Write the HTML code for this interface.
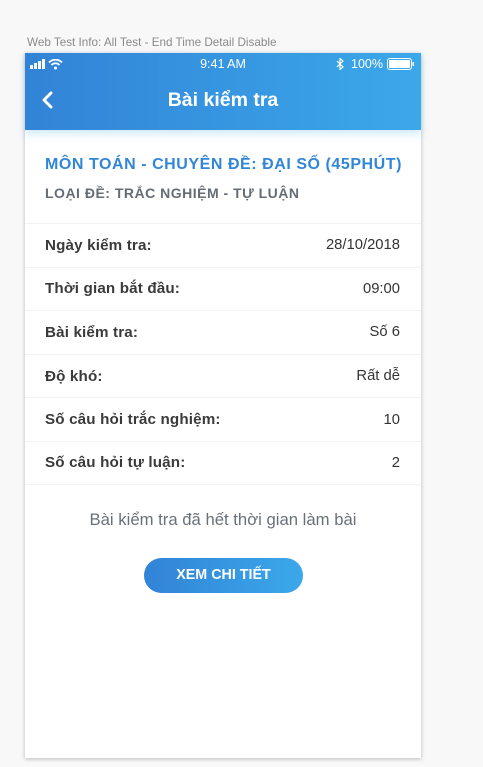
<!DOCTYPE html>
<html><head><meta charset="utf-8"><style>
*{margin:0;padding:0;box-sizing:border-box}
body{width:483px;height:767px;background:#f8f8f8;font-family:"Liberation Sans",Arial,sans-serif;position:relative;overflow:hidden}
.cap{position:absolute;left:27px;top:36px;font-size:11.7px;color:#8a8a8a}
.phone{position:absolute;left:25px;top:53px;width:396px;height:705px;background:#fff;box-shadow:0 1px 4px rgba(0,0,0,.25)}
.hdr{height:77px;background:linear-gradient(90deg,#3283d6,#3ba8ea);color:#fff;position:relative;box-shadow:0 4px 8px rgba(59,168,234,.25)}
.sb{position:absolute;top:4px;left:0;right:0;height:14px;font-size:12.5px}
.time{position:absolute;left:0;right:0;text-align:center;top:0}
.title{position:absolute;left:0;right:0;top:36px;text-align:center;font-size:19.5px;font-weight:bold}
.h1{position:absolute;left:20px;top:103px;font-size:16px;font-weight:bold;color:#3286d8;letter-spacing:.55px}
.h2{position:absolute;left:20px;top:132px;font-size:14px;font-weight:bold;color:#666c73;letter-spacing:.5px}
.rows{position:absolute;left:0;right:0;top:170px}
.row{height:43.6px;border-top:1px solid #f2f2f2;display:flex;justify-content:space-between;align-items:center;padding:0 21px 0 20px;font-size:14.8px;color:#333}
.row b{color:#3a3a3a;font-size:15.2px;letter-spacing:.15px}
.row:last-child{border-bottom:1px solid #f2f2f2}
.msg{position:absolute;left:0;right:0;top:457px;text-align:center;font-size:16.7px;color:#68717a}
.btn{position:absolute;left:119px;top:505px;width:159px;height:35px;border-radius:18px;background:linear-gradient(90deg,#3283d6,#3ba8ea);color:#fff;font-weight:bold;font-size:14.3px;text-align:center;line-height:35px}
</style></head><body>
<div class="cap">Web Test Info: All Test - End Time Detail Disable</div>
<div class="phone">
<div class="hdr">
<div class="sb">
<svg style="position:absolute;left:5px;top:2px" width="40" height="11"><rect x="0" y="6" width="3" height="4" fill="#fff"/><rect x="4" y="4" width="3" height="6" fill="#fff"/><rect x="8" y="2" width="3" height="8" fill="#fff"/><rect x="12" y="0" width="3" height="10" fill="#fff"/><path d="M19 3.5a9 9 0 0 1 13 0M21.5 6a5.5 5.5 0 0 1 8 0" stroke="#fff" stroke-width="1.8" fill="none"/><circle cx="25.5" cy="9" r="1.5" fill="#fff"/></svg>
<div class="time">9:41 AM</div>
<svg style="position:absolute;left:311px;top:1px" width="8" height="12"><path d="M1 3l6 6-3 2.5V.5L7 3 1 9" stroke="#fff" stroke-width="1.2" fill="none"/></svg>
<span style="position:absolute;left:326px;top:0">100%</span>
<svg style="position:absolute;left:362px;top:1px" width="28" height="12"><rect x=".5" y=".5" width="24" height="11" rx="2.5" stroke="#fff" fill="none"/><rect x="2" y="2" width="21" height="8" rx="1" fill="#fff"/><rect x="25.5" y="4" width="1.5" height="4" fill="#fff"/></svg>
</div>
<svg style="position:absolute;left:16px;top:38px" width="12" height="18"><path d="M10 2L3 9l7 7" stroke="#fff" stroke-width="3" fill="none" stroke-linecap="round" stroke-linejoin="round"/></svg>
<div class="title">Bài kiểm tra</div>
</div>
<div class="h1">MÔN TOÁN - CHUYÊN ĐỀ: ĐẠI SỐ (45PHÚT)</div>
<div class="h2">LOẠI ĐỀ: TRẮC NGHIỆM - TỰ LUẬN</div>
<div class="rows">
<div class="row"><b>Ngày kiểm tra:</b><span>28/10/2018</span></div>
<div class="row"><b>Thời gian bắt đầu:</b><span>09:00</span></div>
<div class="row"><b>Bài kiểm tra:</b><span>Số 6</span></div>
<div class="row"><b>Độ khó:</b><span>Rất dễ</span></div>
<div class="row"><b>Số câu hỏi trắc nghiệm:</b><span>10</span></div>
<div class="row"><b>Số câu hỏi tự luận:</b><span>2</span></div>
</div>
<div class="msg">Bài kiểm tra đã hết thời gian làm bài</div>
<div class="btn">XEM CHI TIẾT</div>
</div>
</body></html>
